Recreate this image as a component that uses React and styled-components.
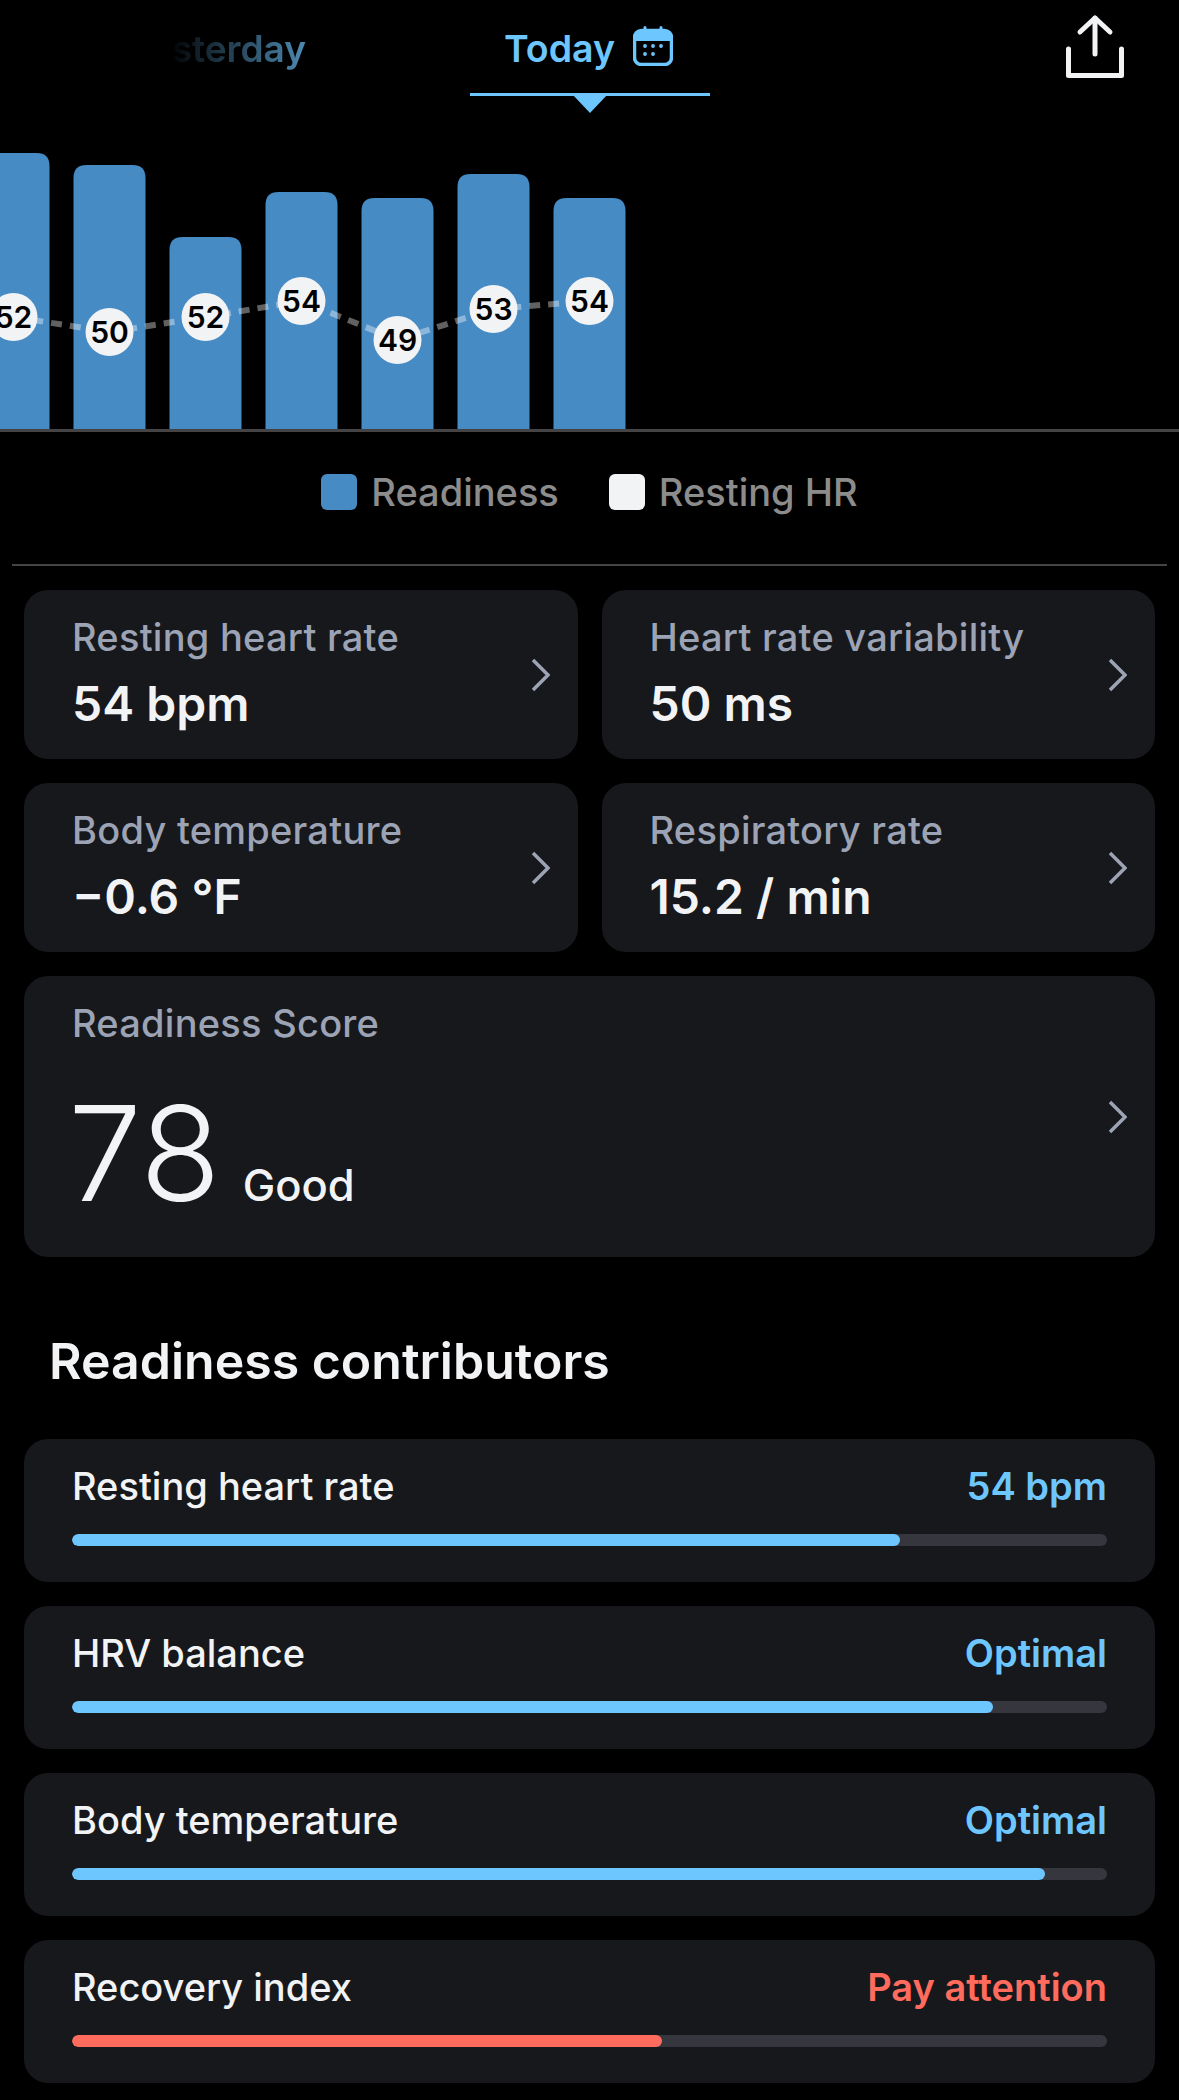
import React from 'react';
import styled, { createGlobalStyle } from 'styled-components';

const Global = createGlobalStyle`
  html, body { margin: 0; padding: 0; background: #000; }
  body { font-family: Inter, "Noto Sans", "Liberation Sans", sans-serif; }
  * { box-sizing: border-box; }
`;

const Page = styled.div`
  width: 1179px;
  height: 2100px;
  background: #000;
  overflow: hidden;
`;

const Header = styled.header`
  height: 114px;
  display: flex;
  align-items: flex-start;
  position: relative;
`;

const PrevTab = styled.div`
  width: 306px;
  height: 96px;
  padding-top: 27px;
  text-align: right;
  font-size: 37px;
  line-height: 44px;
  font-weight: 600;
  color: #6ec6ff;
  white-space: nowrap;
  overflow: hidden;
  -webkit-mask-image: linear-gradient(to right, transparent 170px, rgba(0,0,0,.12) 190px, rgba(0,0,0,.7) 306px);
  mask-image: linear-gradient(to right, transparent 170px, rgba(0,0,0,.12) 190px, rgba(0,0,0,.7) 306px);
`;

const ActiveTab = styled.div`
  margin-left: 164px;
  width: 240px;
  height: 96px;
  border-bottom: 3px solid #6ec6ff;
  display: flex;
  gap: 18px;
  padding: 27px 0 0 34px;
  font-size: 37.5px;
  line-height: 44px;
  font-weight: 600;
  color: #6ec6ff;
  position: relative;
  &::after {
    content: '';
    position: absolute;
    left: 102px;
    top: 94px;
    border-left: 18px solid transparent;
    border-right: 18px solid transparent;
    border-top: 19px solid #6ec6ff;
  }
`;

const ShareButton = styled.div`
  margin-left: auto;
  margin-right: 52px;
  margin-top: 12px;
  width: 64px;
  height: 70px;
`;

const Legend = styled.div`
  height: 134px;
  padding-bottom: 12px;
  display: flex;
  justify-content: center;
  align-items: center;
  gap: 50px;
  border-bottom: 2px solid #444;
  margin: 0 12px;
`;

const LegendItem = styled.div`
  display: flex;
  align-items: center;
  gap: 14px;
  font-size: 38px;
  font-weight: 500;
  color: #8c8c8c;
`;

const Swatch = styled.span`
  width: 36px;
  height: 36px;
  border-radius: 6px;
  background: ${p => p.$color};
`;

const ChartFrame = styled.div`
  height: 318px;
  border-bottom: 3px solid #444;
`;

const Content = styled.div`
  padding: 24px 24px 0;
`;

const Grid = styled.div`
  display: grid;
  grid-template-columns: 1fr 1fr;
  gap: 24px;
`;

const MetricCard = styled.div`
  grid-column: ${p => (p.$wide ? '1 / -1' : 'auto')};
  background: #16181c;
  border-radius: 24px;
  height: ${p => (p.$wide ? '281px' : '169px')};
  padding: 24px 28px 0 48px;
  display: flex;
  align-items: center;
  justify-content: space-between;
`;

const MetricText = styled.div`
  align-self: flex-start;
`;

const MetricLabel = styled.div`
  font-size: 38px;
  line-height: 46px;
  font-weight: 500;
  letter-spacing: 0.25px;
  color: #9ca3b5;
`;

const MetricValue = styled.div`
  margin-top: 17px;
  font-size: 48px;
  line-height: 54px;
  font-weight: 600;
  color: #f2f3f5;
`;

const ScoreRow = styled.div`
  margin-top: 42px;
  margin-left: -4px;
  display: flex;
  align-items: baseline;
  gap: 22px;
`;

const ScoreValue = styled.span`
  font-size: 132px;
  line-height: 130px;
  font-weight: 300;
  color: #f2f3f5;
`;

const ScoreWord = styled.span`
  font-size: 43.5px;
  font-weight: 500;
  color: #f2f3f5;
`;

const Chevron = styled.svg`
  width: 19px;
  height: 34px;
  margin-top: -24px;
  fill: none;
  stroke: #9ca3b5;
  stroke-width: 3.5;
`;

const SectionTitle = styled.h2`
  margin: 76px 0 0 25px;
  height: 106px;
  font-size: 50px;
  line-height: 56px;
  font-weight: 600;
  color: #f2f3f5;
`;

const Contributors = styled.div`
  display: flex;
  flex-direction: column;
  gap: 24px;
`;

const ContributorCard = styled.div`
  background: #16181c;
  border-radius: 24px;
  height: 143px;
  padding: 25px 48px 0;
`;

const ContributorRow = styled.div`
  display: flex;
  justify-content: space-between;
  font-size: 38px;
  line-height: 44px;
  font-weight: 500;
  color: #f2f3f5;
`;

const ContributorValue = styled.span`
  font-weight: 600;
  color: ${p => p.$color};
`;

const Track = styled.div`
  margin-top: 26px;
  height: 12px;
  border-radius: 6px;
  background: #36373e;
  overflow: hidden;
`;

const Fill = styled.div`
  height: 100%;
  border-radius: 6px;
  background: ${p => p.$color};
`;

const BLUE = '#6ec6ff';
const RED = '#ff6b5c';

const bars = [
  { x: -23, top: 153, v: 52, cy: 317 },
  { x: 73, top: 165, v: 50, cy: 332 },
  { x: 169, top: 237, v: 52, cy: 317 },
  { x: 265, top: 192, v: 54, cy: 301 },
  { x: 361, top: 198, v: 49, cy: 340 },
  { x: 457, top: 174, v: 53, cy: 309 },
  { x: 553, top: 198, v: 54, cy: 301 },
];
const OFFSET = 114;

function Chart() {
  const pts = bars.map(b => [b.x + 36.5, b.cy - OFFSET]);
  const line = pts.map((p, i) => `${i ? 'L' : 'M'}${p[0]} ${p[1]}`).join(' ');
  return (
    <svg width="1179" height="315" style={{ display: 'block' }}>
      {bars.map(b => {
        const t = b.top - OFFSET;
        const r = 13;
        return (
          <path
            key={b.x}
            fill="#468bc4"
            d={`M${b.x + 0.5} 315 V${t + r} Q${b.x + 0.5} ${t} ${b.x + 0.5 + r} ${t} H${b.x + 72.5 - r} Q${b.x + 72.5} ${t} ${b.x + 72.5} ${t + r} V315 Z`}
          />
        );
      })}
      <path d={line} fill="none" stroke="rgba(255,255,255,.38)" strokeWidth="6" strokeDasharray="11 8" />
      {bars.map((b, i) => (
        <g key={i}>
          <circle cx={b.x + 36.5} cy={b.cy - OFFSET} r="24" fill="#f2f3f5" />
          <text
            x={b.x + 36.5}
            y={b.cy - OFFSET + 11}
            textAnchor="middle"
            fontSize="30"
            fontWeight="600"
            fill="#000"
            fontFamily="Inter, sans-serif"
          >
            {b.v}
          </text>
        </g>
      ))}
    </svg>
  );
}

const ChevronIcon = () => (
  <Chevron viewBox="0 0 19 34">
    <path d="M2 2 L17 17 L2 32" />
  </Chevron>
);

const metrics = [
  ['Resting heart rate', '54 bpm'],
  ['Heart rate variability', '50 ms'],
  ['Body temperature', '−0.6 °F'],
  ['Respiratory rate', '15.2 / min'],
];

const contributors = [
  ['Resting heart rate', '54 bpm', BLUE, 80],
  ['HRV balance', 'Optimal', BLUE, 89],
  ['Body temperature', 'Optimal', BLUE, 94],
  ['Recovery index', 'Pay attention', RED, 57],
];

export default function App() {
  return (
    <Page>
      <Global />
      <Header>
        <PrevTab>Yesterday</PrevTab>
        <ActiveTab>
          Today
          <svg width="40" height="40" viewBox="0 0 40 40" style={{ marginTop: -1 }}>
            <rect x="1.5" y="4.5" width="37" height="34" rx="7" fill="none" stroke="#6ec6ff" strokeWidth="3.5" />
            <path d="M1.5 11.5 a7 7 0 0 1 7 -7 h23 a7 7 0 0 1 7 7 v3.5 H1.5 Z" fill="#6ec6ff" />
            <path d="M12 1.5 v5 M28 1.5 v5" stroke="#6ec6ff" strokeWidth="3" strokeLinecap="round" />
            <g fill="#6ec6ff">
              <circle cx="12" cy="20" r="1.9" /><circle cx="20" cy="20" r="1.9" /><circle cx="28" cy="20" r="1.9" />
              <circle cx="12" cy="28" r="1.9" /><circle cx="20" cy="28" r="1.9" />
            </g>
          </svg>
        </ActiveTab>
        <ShareButton>
          <svg width="64" height="70" viewBox="0 0 64 70" fill="none" stroke="#f2f3f5" strokeWidth="5" strokeLinecap="round" strokeLinejoin="round">
            <path d="M32 6 V42" />
            <path d="M17 20 L32 6 L47 20" />
            <path d="M5.5 37 V63.5 H58.5 V37" />
          </svg>
        </ShareButton>
      </Header>
      <ChartFrame>
        <Chart />
      </ChartFrame>
      <Legend>
        <LegendItem><Swatch $color="#468bc4" />Readiness</LegendItem>
        <LegendItem><Swatch $color="#f2f3f5" />Resting HR</LegendItem>
      </Legend>
      <Content>
        <Grid>
          {metrics.map(([l, v]) => (
            <MetricCard key={l}>
              <MetricText>
                <MetricLabel>{l}</MetricLabel>
                <MetricValue>{v}</MetricValue>
              </MetricText>
              <ChevronIcon />
            </MetricCard>
          ))}
          <MetricCard $wide>
            <MetricText>
              <MetricLabel>Readiness Score</MetricLabel>
              <ScoreRow>
                <ScoreValue>78</ScoreValue>
                <ScoreWord>Good</ScoreWord>
              </ScoreRow>
            </MetricText>
            <ChevronIcon />
          </MetricCard>
        </Grid>
        <SectionTitle>Readiness contributors</SectionTitle>
        <Contributors>
          {contributors.map(([l, v, c, w]) => (
            <ContributorCard key={l}>
              <ContributorRow>
                <span>{l}</span>
                <ContributorValue $color={c}>{v}</ContributorValue>
              </ContributorRow>
              <Track>
                <Fill $color={c} style={{ width: `${w}%` }} />
              </Track>
            </ContributorCard>
          ))}
        </Contributors>
      </Content>
    </Page>
  );
}
